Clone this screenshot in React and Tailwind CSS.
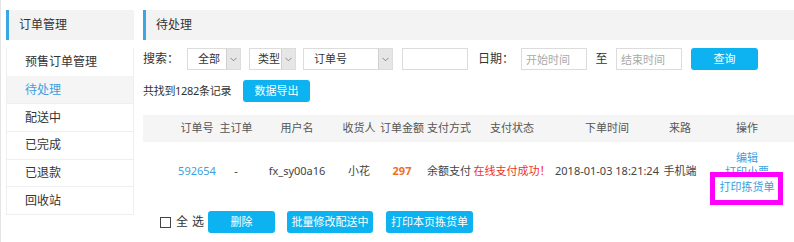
const menu = ["预售订单管理", "待处理", "配送中", "已完成", "已退款", "回收站"];

const cols = "grid-cols-[32px_44px_34px_88px_36px_50px_42px_86px_104px_42px_92px]";
const heads = ["", "订单号", "主订单", "用户名", "收货人", "订单金额", "支付方式", "支付状态", "下单时间", "来路", "操作"];

function Select({ label, w, pad = "pl-[10px]" }) {
  return (
    <div className={`flex h-[22px] border border-[#dcdcdc] bg-white ${w}`}>
      <span className={`flex-1 whitespace-nowrap leading-[20px] text-[11px] text-[#333] ${pad}`}>{label}</span>
      <span className="flex w-[14px] items-center justify-center border-l border-[#cfcfcf] bg-[#e6e6e6]">
        <svg width="7" height="5" viewBox="0 0 7 5" fill="none" stroke="#888" strokeWidth="1">
          <path d="M0.5 0.8 L3.5 3.8 L6.5 0.8" />
        </svg>
      </span>
    </div>
  );
}

function Btn({ children, w }) {
  return (
    <button className={`h-[22px] ${w} rounded-[3px] bg-[#0db2f0] text-[11px] text-white`}>{children}</button>
  );
}

export default function App() {
  return (
    <div
      className="flex h-[242px] w-[794px] gap-[9px] border-l border-[#e4e4e4] bg-white pl-[5px] pt-[10px] text-[#333]"
      style={{ fontFamily: '"Noto Sans", "Noto Sans CJK SC", sans-serif' }}
    >
      <aside className="w-[128px] shrink-0">
        <div className="flex h-[30px] items-center border-l-[3px] border-[#3aa6e4] bg-[#f3f3f3] pl-[10px] text-[12px]">
          订单管理
        </div>
        <ul className="mt-[8px] border-x border-b border-[#efefef]">
          {menu.map((m, i) => (
            <li
              key={m}
              className={`flex h-[27.7px] items-center pl-[18px] text-[12px] ${
                i === 1 ? "bg-[#f5f5f5] text-[#3a9fe0]" : "text-[#333]"
              } ${i > 1 ? "border-t border-[#efefef]" : ""}`}
            >
              {m}
            </li>
          ))}
        </ul>
      </aside>

      <main className="flex-1">
        <div className="flex h-[30px] items-center border-l-[3px] border-[#3aa6e4] bg-[#f3f3f3] pl-[10px] text-[12px]">
          待处理
        </div>

        <div className="mt-[8px] flex h-[22px] items-center text-[12px]">
          <span className="w-[44px]">搜索：</span>
          <Select label="全部" w="w-[54px]" />
          <div className="w-[8px]" />
          <Select label="类型" w="w-[47px]" pad="pl-[8px]" />
          <div className="w-[7px]" />
          <Select label="订单号" w="w-[90px]" />
          <div className="w-[9px]" />
          <input className="h-[22px] w-[66px] border border-[#dcdcdc] outline-none" />
          <span className="ml-[10px] w-[43px]">日期：</span>
          <input
            placeholder="开始时间"
            className="h-[22px] w-[66px] border border-[#dcdcdc] pl-[4px] text-[11px] outline-none placeholder:text-[#aaa]"
          />
          <span className="w-[29px] text-center text-[12px]">至</span>
          <input
            placeholder="结束时间"
            className="h-[22px] w-[66px] border border-[#dcdcdc] pl-[4px] text-[11px] outline-none placeholder:text-[#aaa]"
          />
          <div className="w-[9px]" />
          <Btn w="w-[67px]">查询</Btn>
        </div>

        <div className="mt-[10px] flex h-[22px] items-center text-[11px]">
          <span className="w-[100px] tracking-[-0.3px]">共找到1282条记录</span>
          <Btn w="w-[67px]">数据导出</Btn>
        </div>

        <div className={`mt-[13px] grid h-[27px] items-center bg-[#f5f5f5] text-[11px] text-[#555] ${cols}`}>
          {heads.map((h, i) => (
            <span key={i} className="whitespace-nowrap text-center">
              {h}
            </span>
          ))}
        </div>

        <div className={`grid h-[58px] items-center text-[11px] text-[#444] ${cols}`}>
          <span />
          <span className="text-center text-[#3a9fe0]">592654</span>
          <span className="text-center">-</span>
          <span className="text-center">fx_sy00a16</span>
          <span className="text-center">小花</span>
          <span className="text-center font-bold text-[#f0701e]">297</span>
          <span className="whitespace-nowrap text-center">余额支付</span>
          <span className="whitespace-nowrap text-center text-[#f0302a]">在线支付成功！</span>
          <span className="whitespace-nowrap text-center">2018-01-03 18:21:24</span>
          <span className="whitespace-nowrap text-center">手机端</span>
          <div className="flex flex-col items-center pt-[3px] leading-[14.5px] text-[#3a9fe0]">
            <span>编辑</span>
            <span>打印小票</span>
            <span className="relative">
              <span className="absolute bottom-[-11px] left-[-10px] right-[-8px] top-[-8px] border-[5px] border-[#f0f] bg-white" />
              <span className="relative">打印拣货单</span>
            </span>
          </div>
        </div>

        <div className="mt-[11px] flex h-[22px] items-center text-[11px]">
          <span className="ml-[17px] h-[11px] w-[11px] border border-[#444]" />
          <span className="ml-[5px] w-[32px] tracking-[4px] text-[12px]">全选</span>
          <Btn w="w-[67px]">删除</Btn>
          <div className="w-[12px]" />
          <Btn w="w-[86px]">批量修改配送中</Btn>
          <div className="w-[13px]" />
          <Btn w="w-[87px]">打印本页拣货单</Btn>
        </div>
      </main>
    </div>
  );
}
